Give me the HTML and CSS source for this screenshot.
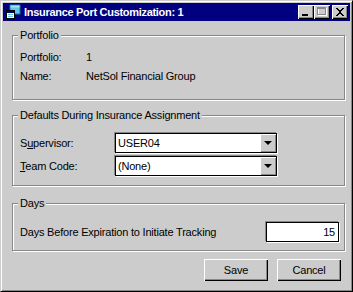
FILE: index.html
```html
<!DOCTYPE html>
<html lang="en">
<head>
    <meta charset="UTF-8">
    <title>Insurance Port Customization: 1</title>
    <link rel="stylesheet" href="styles.css">
</head>
<body>
    <div class="window">
        <div class="titlebar">
            <svg class="app-icon" width="16" height="16" viewBox="0 0 16 16">
                <rect x="5" y="1" width="10" height="9" fill="#5fc8e8" stroke="#1f6f9f" stroke-width="1"/>
                <rect x="5.5" y="1.5" width="9" height="2" fill="#9be3f5"/>
                <rect x="1.5" y="6.5" width="8" height="8" fill="#fff" stroke="#000" stroke-width="1"/>
                <rect x="2" y="7" width="7" height="2" fill="#000080"/>
                <rect x="3" y="10" width="5" height="1" fill="#5fc8e8"/>
                <rect x="3" y="12" width="5" height="1" fill="#5fc8e8"/>
            </svg>
            <span class="title">Insurance Port Customization: 1</span>
            <div class="caption-btns">
                <span class="cbtn">
                    <svg width="16" height="14" viewBox="0 0 16 14"><rect x="4" y="9" width="6" height="2" fill="#000"/></svg>
                </span>
                <span class="cbtn">
                    <svg width="16" height="14" viewBox="0 0 16 14">
                        <rect x="4.5" y="3.5" width="8" height="7" fill="none" stroke="#fff"/>
                        <rect x="3.5" y="2.5" width="8" height="7" fill="none" stroke="#888"/>
                        <rect x="4" y="3" width="7" height="1" fill="#888"/>
                    </svg>
                </span>
                <span class="cbtn close">
                    <svg width="16" height="14" viewBox="0 0 16 14">
                        <path d="M4 3h2v1h1v1h2V4h1V3h2v1h-1v1h-1v1H9v2h1v1h1v1h1v1h-2v-1H9V9H7v1H6v1H4v-1h1V9h1V8h1V6H6V5H5V4H4z" fill="#000"/>
                    </svg>
                </span>
            </div>
        </div>

        <div class="content">
            <fieldset class="group">
                <legend>Portfolio</legend>
                <div class="info-row"><span class="info-label">Portfolio:</span><span>1</span></div>
                <div class="info-row"><span class="info-label">Name:</span><span>NetSol Financial Group</span></div>
            </fieldset>

            <fieldset class="group defaults">
                <legend>Defaults During Insurance Assignment</legend>
                <div class="field-row">
                    <span class="field-label">S<u>u</u>pervisor:</span>
                    <div class="combo">
                        <span class="combo-text">USER04</span>
                        <span class="combo-btn"><span class="arrow"></span></span>
                    </div>
                </div>
                <div class="field-row">
                    <span class="field-label"><u>T</u>eam Code:</span>
                    <div class="combo">
                        <span class="combo-text">(None)</span>
                        <span class="combo-btn"><span class="arrow"></span></span>
                    </div>
                </div>
            </fieldset>

            <fieldset class="group days">
                <legend>Days</legend>
                <div class="field-row">
                    <span class="days-label">Days Before Expiration to Initiate Tracking</span>
                    <div class="textbox">15</div>
                </div>
            </fieldset>

            <div class="actions">
                <button class="btn">Save</button>
                <button class="btn">Cancel</button>
            </div>
        </div>
    </div>
</body>
</html>
```

FILE: styles.css
```css
* {
    box-sizing: border-box;
}
body {
    margin: 0;
    background: #cccccc;
}
.window {
    width: 353px;
    height: 292px;
    border: 1px solid;
    border-color: #cccccc #000 #000 #cccccc;
    padding: 2px;
    background: #cccccc;
    box-shadow: inset 1px 1px #fff, inset -1px -1px #888;
    font-family: "Liberation Sans", Arial, sans-serif;
    font-size: 11px;
    letter-spacing: -0.2px;
    color: #000;
}

/* title bar */
.titlebar {
    height: 18px;
    background: #000080;
    display: flex;
    align-items: center;
    padding: 0 2px 0 2px;
    color: #fff;
}
.app-icon {
    flex: none;
}
.title {
    margin-left: 3px;
    font-weight: bold;
    font-size: 11px;
    letter-spacing: -0.3px;
    white-space: nowrap;
}
.caption-btns {
    margin-left: auto;
    display: flex;
}
.cbtn {
    width: 16px;
    height: 14px;
    background: #cccccc;
    box-shadow: inset 1px 1px #fff, inset -1px -1px #000, inset -2px -2px #888;
}
.cbtn svg {
    display: block;
}
.cbtn.close {
    margin-left: 2px;
}

/* body */
.content {
    padding: 8px 5px 0 9px;
}
.group {
    margin: 0;
    padding: 5px 5px 14px 7px;
    border: 1px solid #888;
    box-shadow: inset 1px 1px #fff, 1px 1px #fff;
}
.group legend {
    padding: 0 2px;
    margin-left: -2px;
    line-height: 13px;
    background: #cccccc;
}
.info-row {
    display: flex;
    align-items: center;
    height: 19px;
}
.info-label {
    width: 66px;
}

.defaults {
    margin-top: 9px;
    padding-top: 10px;
    padding-bottom: 9px;
}
.field-row {
    display: flex;
    align-items: center;
    height: 21px;
}
.field-row + .field-row {
    margin-top: 2px;
}
.field-label {
    width: 95px;
}
.combo {
    display: flex;
    width: 162px;
    height: 20px;
    background: #fff;
    border: 1px solid #000;
    box-shadow: -1px -1px #888, 1px 1px #fff;
}
.combo-text {
    flex: 1;
    padding-left: 2px;
    line-height: 18px;
}
.combo-btn {
    width: 16px;
    background: #cccccc;
    display: flex;
    align-items: center;
    justify-content: center;
    box-shadow: inset 1px 1px #fff, inset -1px -1px #888;
}
.arrow {
    width: 0;
    height: 0;
    border-left: 4px solid transparent;
    border-right: 4px solid transparent;
    border-top: 4px solid #000;
}

.days {
    margin-top: 11px;
    padding-top: 11px;
    padding-bottom: 8px;
}
.days-label {
    flex: 1;
}
.textbox {
    width: 73px;
    height: 20px;
    background: #fff;
    border: 1px solid #000;
    box-shadow: -1px -1px #888, 1px 1px #fff;
    text-align: right;
    padding-right: 3px;
    line-height: 18px;
}

.actions {
    display: flex;
    justify-content: flex-end;
    gap: 9px;
    margin-top: 8px;
    padding-right: 4px;
}
.btn {
    width: 64px;
    height: 22px;
    border: none;
    padding: 0;
    background: #cccccc;
    font-family: inherit;
    font-size: 11px;
    letter-spacing: -0.2px;
    color: #000;
    box-shadow: inset 1px 1px #fff, inset -1px -1px #000, inset -2px -2px #888;
}
```
